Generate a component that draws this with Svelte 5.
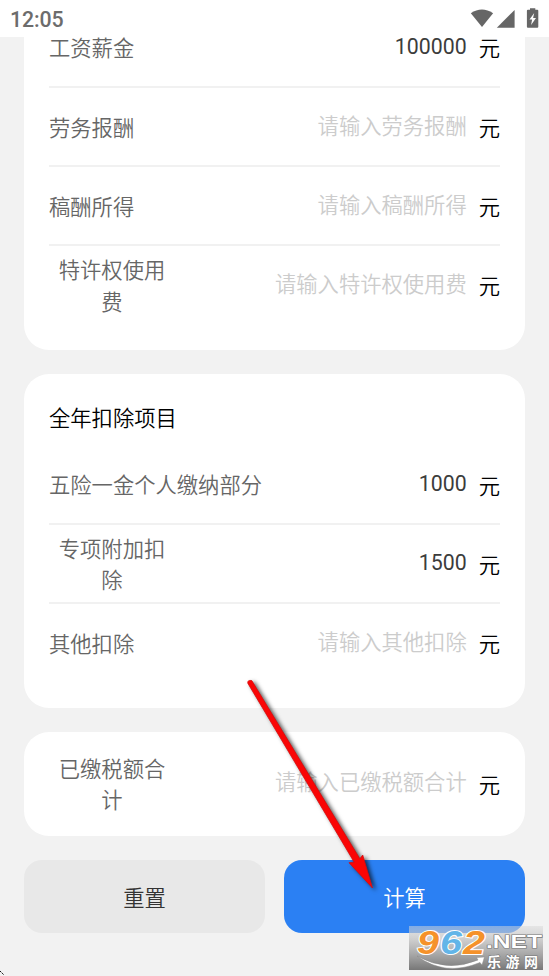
<script lang="ts">
  type Field = {
    label: string;
    value?: string;
    hint?: string;
    wide?: boolean;
  };

  const income: Field[] = [
    { label: '工资薪金', value: '100000' },
    { label: '劳务报酬', hint: '请输入劳务报酬' },
    { label: '稿酬所得', hint: '请输入稿酬所得' },
    { label: '特许权使用费', hint: '请输入特许权使用费' },
  ];

  const deductions: Field[] = [
    { label: '五险一金个人缴纳部分', value: '1000', wide: true },
    { label: '专项附加扣除', value: '1500' },
    { label: '其他扣除', hint: '请输入其他扣除' },
  ];

  const paid: Field[] = [{ label: '已缴税额合计', hint: '请输入已缴税额合计' }];
</script>

{#snippet rows(fields: Field[])}
  {#each fields as field}
    <div class="row">
      <span class="label" class:wide={field.wide} class:multi={!field.wide && field.label.length > 5}>{field.label}</span>
      <span class="field" class:hint={!field.value}>{field.value ?? field.hint}</span>
      <span class="unit">元</span>
    </div>
  {/each}
{/snippet}

<div class="screen">
  <header class="status">
    <span class="time">12:05</span>
    <svg class="status-icons" width="72" height="24" viewBox="0 0 72 24" aria-hidden="true">
      <path d="M.8 5.2Q11.9 -2.3 23.1 5.2L12 19z" />
      <path d="M44.6 2V19.7H26.8z" />
      <path
        fill-rule="evenodd"
        d="M60 .3h5.300v1.400h2q1 0 1 1v16q0 1-1 1h-9.400q-1 0-1-1V2.700q0-1 1-1H60zM64.200 5l-4.700 6.400h2.600l-1 5.600 4.900-7h-2.900z"
      />
    </svg>
  </header>

  <main class="content">
    <section class="card first">
      {@render rows(income)}
    </section>

    <section class="card">
      <h2>全年扣除项目</h2>
      {@render rows(deductions)}
    </section>

    <section class="card short">
      {@render rows(paid)}
    </section>

    <div class="actions">
      <button type="button" class="reset">重置</button>
      <button type="button" class="submit">计算</button>
    </div>
  </main>

  <svg class="arrow" width="150" height="230" viewBox="240 670 150 230" aria-hidden="true">
    <path d="M247.800 683.200Q247.300 679.600 251.800 680.600L359.900 858.800 362.700 855 372.500 888 349 862.700 354.200 862.200z" />
  </svg>

  <svg class="watermark" width="134" height="44" viewBox="0 0 134 44">
    <defs>
      <linearGradient id="shade" x1="0" y1="0" x2="0" y2="1">
        <stop offset="0" stop-color="#d8d8d8" stop-opacity=".5" />
        <stop offset=".4" stop-color="#bcbcbc" stop-opacity=".85" />
        <stop offset="1" stop-color="#777" />
      </linearGradient>
    </defs>
    <rect width="134" height="44" fill="url(#shade)" />
    <g class="digits">
      <text x="8" y="28" textLength="22" lengthAdjust="spacingAndGlyphs" fill="#f5922a">9</text>
      <text x="31" y="28" textLength="22" lengthAdjust="spacingAndGlyphs" fill="#62b5e8">6</text>
      <text x="54" y="28" textLength="22" lengthAdjust="spacingAndGlyphs" fill="#f5922a">2</text>
    </g>
    <text class="net" x="77" y="22" textLength="56" lengthAdjust="spacingAndGlyphs">.NET</text>
    <text class="site" x="78" y="40.5" textLength="51">乐游网</text>
    <path class="swoosh" d="M8 30Q38 47 69 34L67.500 31.500 75.500 31 73 39 71 36.500Q36 51 8 30z" />
  </svg>

  <svg class="corner" width="5" height="6" viewBox="0 0 5 6" aria-hidden="true">
    <path d="M0 1l4 4" />
  </svg>
</div>

<style>
  :global(body) {
    background: #f2f2f2;
  }

  .screen {
    position: relative;
    height: 976px;
    overflow: hidden;
    background: #f2f2f2;
    font-family: Roboto, 'Noto Sans CJK SC', sans-serif;
    font-size: 21.3px;
    color: #000;
  }

  .status {
    display: flex;
    justify-content: space-between;
    box-sizing: border-box;
    height: 37px;
    padding: 8px 7px 0 10px;
    background: #fff;
  }

  .time {
    font-size: 21.3px;
    line-height: 23px;
    font-weight: 500;
    letter-spacing: -0.1px;
    color: #6c6c6c;
  }

  .status-icons {
    fill: #666;
  }

  .content {
    display: flex;
    flex-direction: column;
    gap: 24px;
    padding: 0 24px;
  }

  .card {
    box-sizing: border-box;
    height: 334px;
    padding: 25px;
    border-radius: 25px;
    background: #fff;
  }

  .card.first {
    display: flex;
    flex-direction: column;
    justify-content: flex-end;
    height: 313px;
    border-radius: 0 0 25px 25px;
    padding: 0 25px 24.5px;
  }

  .card.short {
    height: 104px;
    padding: 12.5px 25px 12px;
  }

  h2 {
    height: 46.5px;
    margin: 0;
    font-size: inherit;
    font-weight: 350;
    line-height: 40px;
  }

  .row {
    display: flex;
    flex: none;
    align-items: center;
    box-sizing: border-box;
    height: 79.3px;
    border-bottom: 2px solid #f1f1f1;
  }

  .row:last-child {
    border-bottom-color: transparent;
  }

  .label {
    flex: none;
    width: 126px;
    padding-top: 4px;
    font-weight: 350;
    line-height: 31.5px;
    color: #666;
  }

  .label.multi {
    text-align: center;
  }

  .label.wide {
    width: 214px;
  }

  .field {
    flex: 1;
    padding-right: 12px;
    text-align: right;
    line-height: 32px;
    color: #3c3c3c;
  }

  .field.hint {
    padding-top: 0.5px;
    font-weight: 350;
    color: #ccc;
  }

  .unit {
    padding-top: 5px;
    font-weight: 350;
    line-height: 32px;
  }

  .actions {
    display: flex;
    gap: 19px;
  }

  button {
    flex: 1;
    height: 73px;
    padding: 0;
    border: 0;
    border-radius: 18px;
    font: inherit;
    font-weight: 350;
  }

  .reset {
    background: #e8e8e8;
    color: #333;
  }

  .submit {
    background: #2b80f3;
    color: #fff;
  }

  .arrow {
    position: absolute;
    left: 240px;
    top: 670px;
    fill: #fa0505;
    stroke: #d80c0c;
    stroke-width: 0.8;
    filter: drop-shadow(3px 2px 2px rgba(0, 0, 0, 0.65));
  }

  .watermark {
    position: absolute;
    left: 409px;
    top: 926px;
    overflow: visible;
  }

  .digits {
    font: italic 700 33px 'Liberation Sans', sans-serif;
    stroke: #fff;
    stroke-width: 2px;
    paint-order: stroke;
  }

  .net,
  .site {
    fill: #fff;
    stroke: #777;
    stroke-width: 1.2px;
    paint-order: stroke;
  }

  .net {
    font: 700 18px 'Liberation Sans', sans-serif;
  }

  .site {
    font: 700 14px 'Noto Sans CJK SC', sans-serif;
  }

  .swoosh {
    fill: #fff;
    stroke: #888;
    stroke-width: 0.5;
  }

  .corner {
    position: absolute;
    left: 0;
    bottom: 0;
    stroke: #111;
    stroke-dasharray: 2 1;
  }
</style>
